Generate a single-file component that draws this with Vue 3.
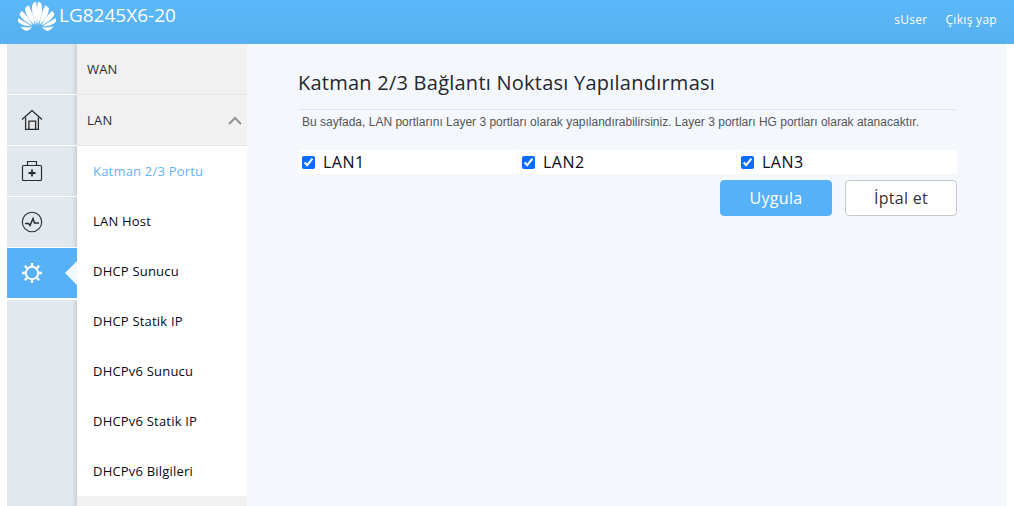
<template>
  <div class="page">
    <header class="top-bar">
      <div class="brand">
        <svg class="logo" width="40" height="32" viewBox="0 0 40 32">
          <g fill="#fff">
            <path d="M19.2 25 C15.5 17 14 9 15.8 3.4 C16.8 2.6 18 2 19 1.8 C20.6 9 20.6 17 19.2 25 Z" />
            <path d="M20.8 25 C24.5 17 26 9 24.2 3.4 C23.2 2.6 22 2 21 1.8 C19.4 9 19.4 17 20.8 25 Z" />
            <path d="M17.4 25 C12 20 7.6 13.5 8.2 8 C9.2 6.8 10.4 5.8 11.6 5.2 C15 11 17 18 17.4 25 Z" />
            <path d="M22.6 25 C28 20 32.4 13.5 31.8 8 C30.8 6.8 29.6 5.8 28.4 5.2 C25 11 23 18 22.6 25 Z" />
            <path d="M15.6 25.4 C10 22.8 4.6 19 2.6 14.4 C3 13 3.8 11.8 4.8 10.8 C9 15 13.4 20 15.6 25.4 Z" />
            <path d="M24.4 25.4 C30 22.8 35.4 19 37.4 14.4 C37 13 36.2 11.8 35.2 10.8 C31 15 26.6 20 24.4 25.4 Z" />
            <path d="M14.6 26.4 C9 26.4 3.6 25 1 21.6 C0.8 20.4 1 19.2 1.4 18 C6 21 10.8 23.6 14.6 26.4 Z" />
            <path d="M25.4 26.4 C31 26.4 36.4 25 39 21.6 C39.2 20.4 39 19.2 38.6 18 C34 21 29.2 23.6 25.4 26.4 Z" />
            <path d="M15 27.6 C11 27.6 6.8 27.4 3.6 26.6 C5 29 7.4 30.6 9.8 31 C11.8 30.4 13.6 29.2 15 27.6 Z" />
            <path d="M25 27.6 C29 27.6 33.2 27.4 36.4 26.6 C35 29 32.6 30.6 30.2 31 C28.2 30.4 26.4 29.2 25 27.6 Z" />
          </g>
        </svg>
        <span class="model">LG8245X6-20</span>
      </div>
      <nav class="user-links">
        <span>sUser</span>
        <span>Çıkış yap</span>
      </nav>
    </header>

    <div class="body-row">
      <aside class="rail">
        <div class="rail-item"></div>
        <div class="rail-item">
          <svg width="22" height="22" viewBox="0 0 22 22" fill="none" stroke="#2b2b2b" stroke-width="1.3">
            <path d="M1 10.5 L11 1.6 L21 10.5" />
            <path d="M4.6 8.5 V20.4 H17.4 V8.5" />
            <path d="M7.9 20.4 V12.2 H14.6 V20.4" />
          </svg>
        </div>
        <div class="rail-item">
          <svg width="22" height="22" viewBox="0 0 22 22" fill="none" stroke="#2b2b2b" stroke-width="1.2">
            <rect x="1.5" y="5.5" width="19" height="15" rx="1" />
            <path d="M6.5 5.5 V1.5 H15.5 V5.5" />
            <path d="M7.5 13 H14.5 M11 9.5 V16.5" stroke-width="1.8" />
          </svg>
        </div>
        <div class="rail-item">
          <svg width="22" height="22" viewBox="0 0 22 22" fill="none" stroke="#2b2b2b" stroke-width="1.1">
            <circle cx="11" cy="11" r="9.7" />
            <path d="M4 12.5 H7.5 L9 14.5 L12 7.5 L13.5 12 H18" stroke-width="1.5" />
          </svg>
        </div>
        <div class="rail-item active">
          <svg width="22" height="22" viewBox="0 0 22 22" fill="none" stroke="#fff">
            <circle cx="11" cy="11" r="6.2" stroke-width="2" />
            <path d="M11 1 V4 M11 18 V21 M1 11 H4 M18 11 H21 M3.9 3.9 L6 6 M16 16 L18.1 18.1 M18.1 3.9 L16 6 M6 16 L3.9 18.1" stroke-width="2.4" />
          </svg>
          <span class="pointer"></span>
        </div>
        <div class="rail-fill"></div>
      </aside>

      <nav class="submenu">
        <div class="group-title">WAN</div>
        <div class="group-title">
          LAN
          <svg class="chevron" width="14" height="9" viewBox="0 0 14 9" fill="none" stroke="#8f9498" stroke-width="2">
            <path d="M1 8 L7 2 L13 8" />
          </svg>
        </div>
        <a
          v-for="item in subItems"
          :key="item"
          class="sub-item"
          :class="{ current: item === 'Katman 2/3 Portu' }"
        >{{ item }}</a>
        <div class="submenu-fill"></div>
      </nav>

      <main class="content">
        <h1 class="title">Katman 2/3 Bağlantı Noktası Yapılandırması</h1>
        <p class="desc">Bu sayfada, LAN portlarını Layer 3 portları olarak yapılandırabilirsiniz. Layer 3 portları HG portları olarak atanacaktır.</p>
        <div class="port-grid">
          <label v-for="port in ports" :key="port" class="port">
            <input type="checkbox" checked />
            <span>{{ port }}</span>
          </label>
        </div>
        <div class="actions">
          <button class="btn primary">Uygula</button>
          <button class="btn">İptal et</button>
        </div>
      </main>
    </div>
  </div>
</template>

<script setup>
const subItems = [
  'Katman 2/3 Portu',
  'LAN Host',
  'DHCP Sunucu',
  'DHCP Statik IP',
  'DHCPv6 Sunucu',
  'DHCPv6 Statik IP',
  'DHCPv6 Bilgileri'
]

const ports = ['LAN1', 'LAN2', 'LAN3']
</script>

<style>
html,
body {
  margin: 0;
  overflow: hidden;
  background: #fff;
}
</style>

<style scoped>
.page {
  width: 1014px;
  height: 506px;
  display: flex;
  flex-direction: column;
  overflow: hidden;
  font-family: "Open Sans", "Noto Sans", sans-serif;
}

.top-bar {
  height: 44px;
  flex: none;
  display: flex;
  justify-content: space-between;
  background: linear-gradient(#5bb8f8, #57b0f0);
  color: #fff;
}

.brand {
  display: flex;
  align-items: flex-start;
  padding-left: 17px;
}

.model {
  margin-left: 2px;
  font-size: 19px;
  line-height: 30px;
}

.user-links {
  display: flex;
  gap: 18px;
  padding: 10px 17px 0 0;
  font-size: 12px;
  line-height: 20px;
  letter-spacing: 0.3px;
}

.body-row {
  flex: 1;
  display: flex;
  padding: 0 7px;
  min-height: 0;
}

.rail {
  width: 70px;
  flex: none;
  display: flex;
  flex-direction: column;
  background: #fff;
}

.rail-item {
  position: relative;
  height: 50px;
  margin-bottom: 1px;
  flex: none;
  display: flex;
  align-items: center;
  justify-content: center;
  background: #e2e9ee;
  box-shadow: inset -5px 0 4px -3px rgba(0, 0, 0, 0.12);
}

.rail-item svg {
  margin-right: 20px;
}

.rail-item.active {
  background: #57b1f6;
  box-shadow: none;
}

.pointer {
  position: absolute;
  right: 0;
  top: 13px;
  width: 0;
  height: 0;
  border-top: 12px solid transparent;
  border-bottom: 12px solid transparent;
  border-right: 12px solid #f3f8fd;
}

.rail-fill {
  flex: 1;
  margin-top: 1px;
  background: #e2e9ee;
  box-shadow: inset -5px 0 4px -3px rgba(0, 0, 0, 0.12);
}

.submenu {
  width: 170px;
  flex: none;
  display: flex;
  flex-direction: column;
  background: #fff;
  letter-spacing: 0.2px;
}

.group-title {
  height: 50px;
  flex: none;
  display: flex;
  align-items: center;
  justify-content: space-between;
  padding: 0 5px 0 10px;
  background: #f1f1f1;
  border-bottom: 1px solid #e6e6e6;
  font-size: 13px;
  color: #2c2c3a;
}

.sub-item {
  height: 50px;
  flex: none;
  display: flex;
  align-items: center;
  padding-left: 16px;
  font-size: 13px;
  color: #0a0a14;
}

.sub-item.current {
  color: #62b6f7;
}

.submenu-fill {
  flex: 1;
  background: #f1f1f1;
}

.content {
  flex: 1;
  box-sizing: border-box;
  padding: 0 50px 0 51px;
  background: #f4f8fd;
}

.title {
  margin: 0;
  padding-top: 25px;
  height: 40px;
  font-size: 20px;
  font-weight: 400;
  line-height: 28px;
  letter-spacing: 0.24px;
  color: #26262e;
  border-bottom: 1px solid #e3e6ea;
}

.desc {
  margin: 0;
  padding: 5px 0 0 4px;
  font-family: "Liberation Sans", Arial, sans-serif;
  font-size: 12px;
  line-height: 14px;
  color: #55555a;
}

.port-grid {
  margin-top: 21px;
  display: grid;
  grid-template-columns: 219px 218px 1fr;
  gap: 1px;
}

.port {
  height: 24px;
  display: flex;
  align-items: center;
  gap: 8px;
  padding-left: 4px;
  background: #fff;
  font-size: 16px;
  letter-spacing: 0.5px;
  color: #0a0a14;
}

.port input {
  width: 13px;
  height: 13px;
  margin: 0;
  accent-color: #0a6cff;
}

.actions {
  margin-top: 6px;
  display: flex;
  justify-content: flex-end;
  gap: 13px;
}

.btn {
  width: 112px;
  height: 36px;
  box-sizing: border-box;
  border: 1px solid #c8c8c8;
  border-radius: 4px;
  background: #fff;
  font-family: inherit;
  font-size: 16px;
  letter-spacing: 0.3px;
  color: #333;
  padding: 0;
}

.btn.primary {
  background: #57b1f8;
  border-color: #57b1f8;
  color: #fff;
}
</style>
